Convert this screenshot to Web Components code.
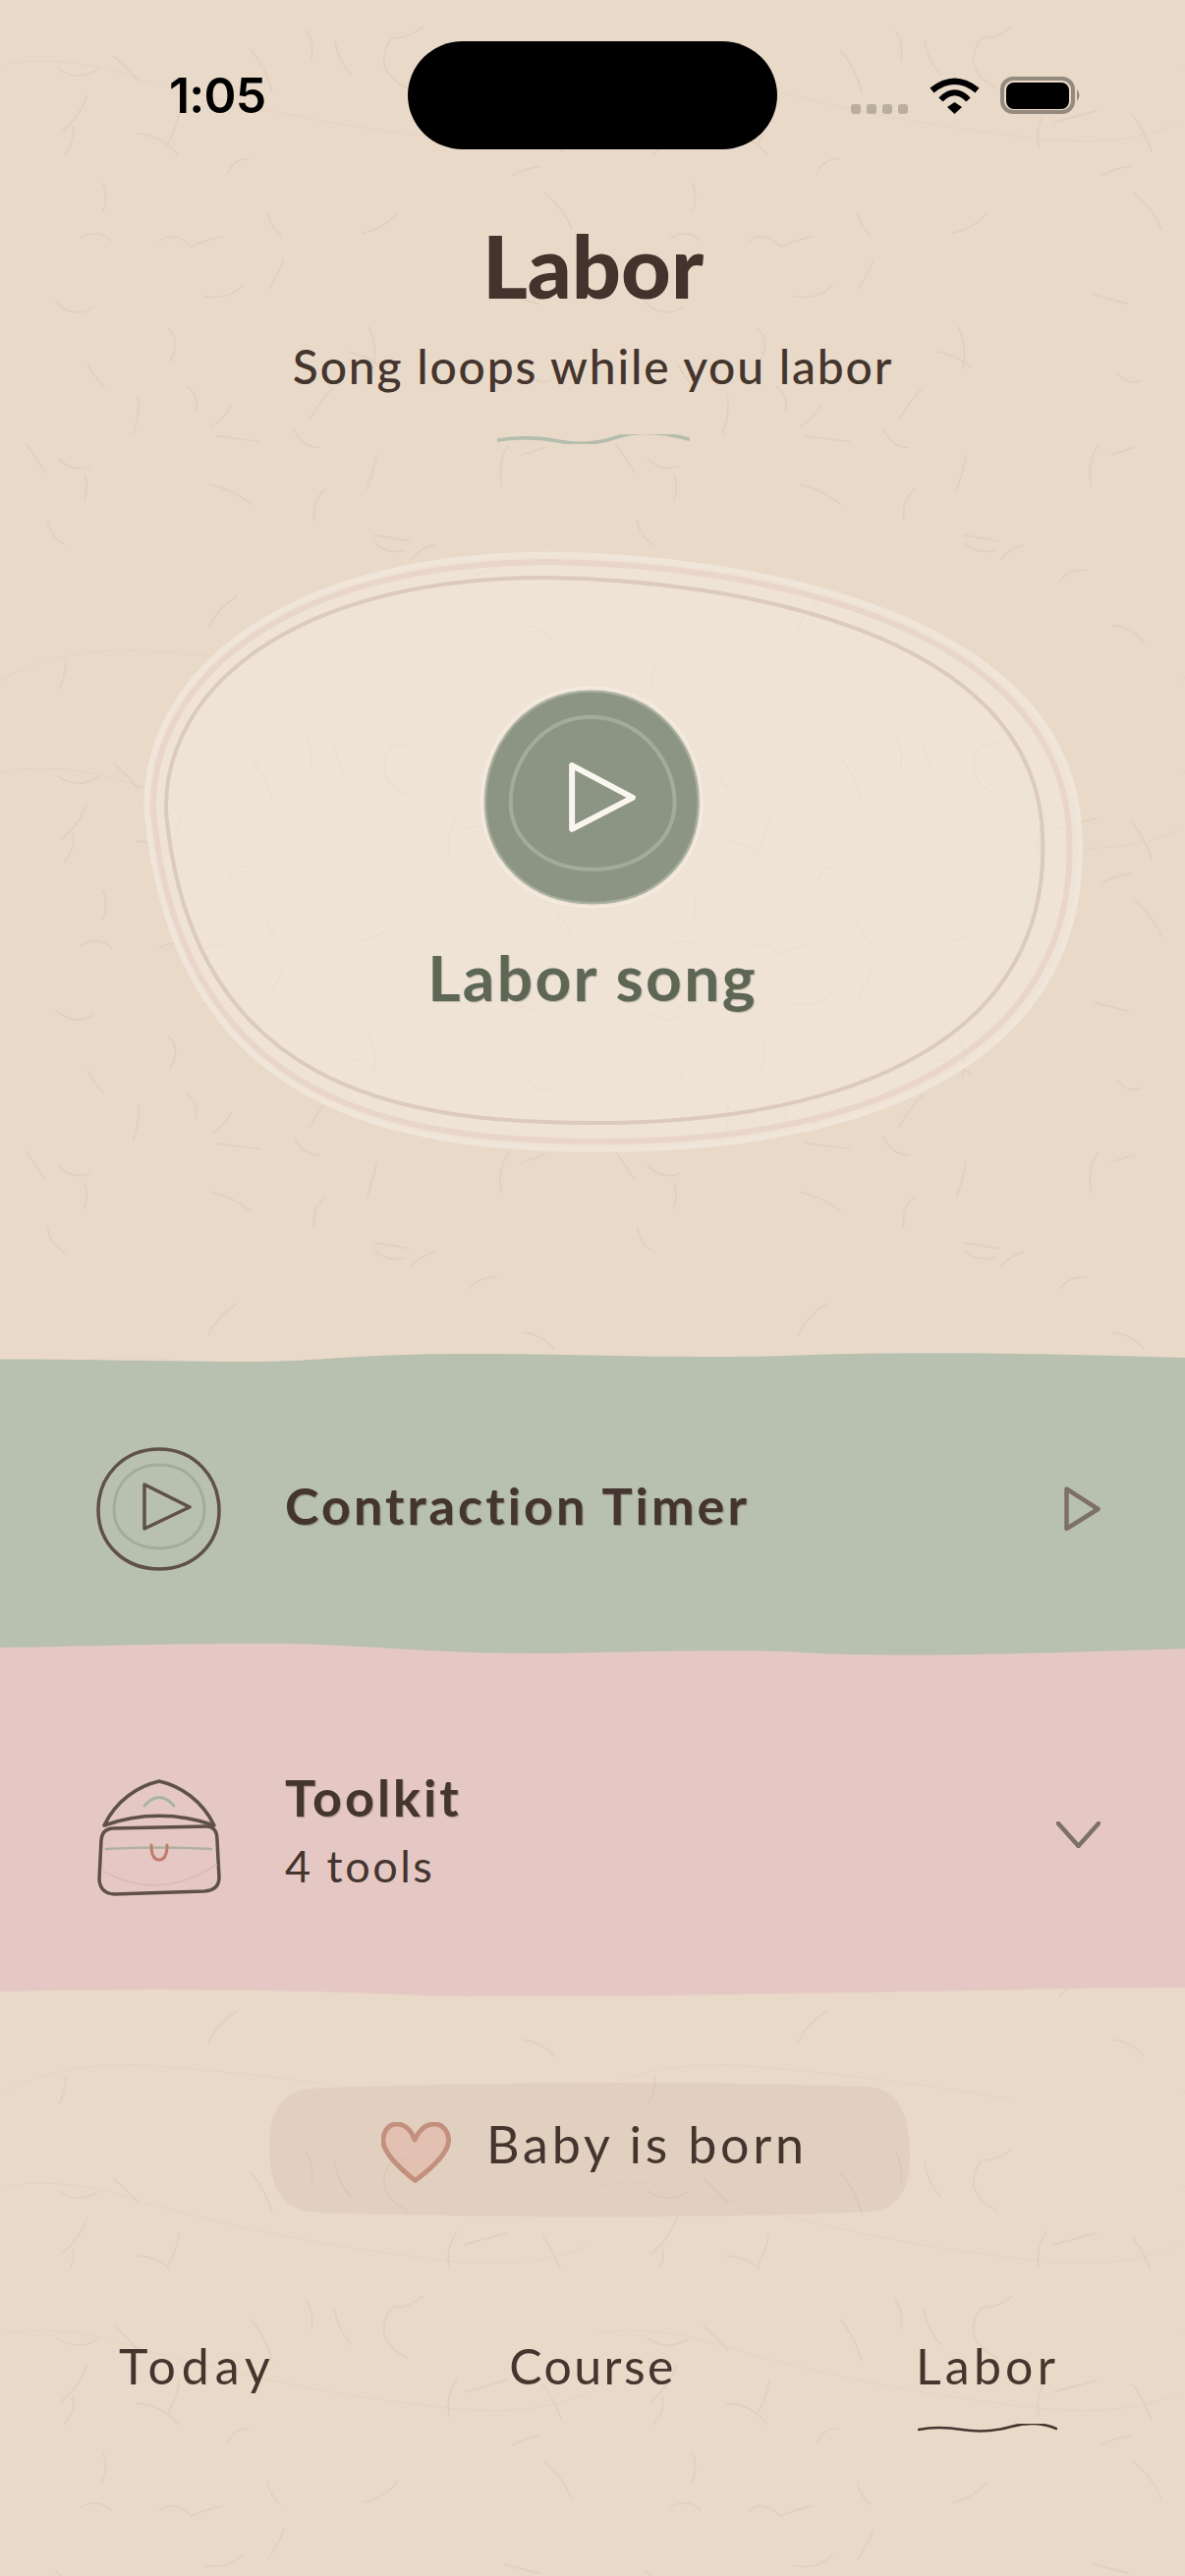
<!DOCTYPE html>
<html lang="en">
<head>
<meta charset="utf-8">
<title>Labor</title>
<style>
  html, body { margin: 0; padding: 0; background: #e9d9c8; }
</style>
</head>
<body>
<labor-app>
  <status-bar></status-bar>
  <page-header title="Labor" subtitle="Song loops while you labor"></page-header>
  <song-blob label="Labor song"></song-blob>
  <wave-row tone="sage" title="Contraction Timer" icon="timer" action="play"></wave-row>
  <wave-row tone="blush" title="Toolkit" detail="4 tools" icon="bag" action="chevron"></wave-row>
  <born-button label="Baby is born"></born-button>
  <tab-bar active="Labor"></tab-bar>
</labor-app>

<script>
const FONT = `Lato, "Noto Sans", sans-serif`
const INK = '#44352e'

// Fibres of the paper, in a 1542x1850 box that maps on a 600x720 tile
const FIBRES = [
  'M152 180Q205 215 255 182', 'M298 148Q330 175 362 212', 'M228 250Q210 305 160 345',
  'M190 330Q200 365 168 405', 'M358 350Q420 350 465 405', 'M470 290Q460 340 440 375',
  'M655 130Q695 175 712 240', 'M800 80Q822 110 815 155', 'M875 105Q885 160 918 195',
  'M1105 70Q1070 100 1025 100Q1000 130 1005 170Q1020 210 1065 230',
  'M595 455Q610 415 650 415', 'M270 480Q285 520 268 555', 'M700 555Q705 590 735 615',
  'M1040 555Q1010 595 950 610', 'M212 622Q255 595 292 630',
  'M418 630Q455 600 500 645Q530 630 582 618', 'M742 680Q730 715 703 755',
  'M635 745Q600 785 535 775', 'M145 790Q190 835 243 805', 'M440 860Q475 890 445 945',
  'M230 950Q245 985 272 1010', 'M965 855Q990 910 975 965', 'M910 920Q950 925 1000 960',
  'M490 1012Q520 1035 513 1075', 'M605 1058Q590 1095 552 1115', 'M362 1040Q365 1090 348 1135',
  'M870 1015Q835 1050 808 1100', 'M565 1140L680 1155', 'M770 1125Q790 1170 835 1170',
  'M68 1160L118 1235', 'M152 1200Q190 1235 235 1220', 'M222 1245Q232 1280 220 1310',
  'M985 1190Q975 1240 960 1280', 'M1330 1165Q1300 1210 1312 1270', 'M1365 1190L1425 1170',
  'M550 1268Q610 1280 658 1320', 'M850 1280Q815 1310 822 1360', 'M125 1360Q130 1405 170 1425',
  'M980 1400L1070 1415', 'M980 1420Q1010 1450 1060 1440', 'M1075 1465Q1095 1435 1135 1425',
  'M1230 1520Q1250 1490 1300 1490', 'M1340 460Q1370 440 1415 435', 'M1425 505Q1475 545 1495 600',
  'M1195 285Q1165 330 1175 385', 'M1215 320L1325 290', 'M1420 300Q1450 340 1470 396',
  'M1370 1635Q1420 1640 1450 1680', 'M620 1560Q570 1590 545 1642', 'M172 1732Q170 1770 155 1802',
  'M1320 771L1410 795', 'M1380 975Q1410 1010 1440 995'
]
const FAINT = ['M0 170Q130 145 280 180Q700 310 1150 360Q1400 390 1542 320', 'M0 1781Q120 1700 350 1700Q700 1720 1100 1790']

function paperUrl() {
  const svg = `<svg xmlns="http://www.w3.org/2000/svg" width="600" height="720" viewBox="0 0 1542 1850" fill="none" stroke-linecap="round">`
    + `<path d="${FIBRES.join('')}" stroke="#8a7055" stroke-opacity=".085" stroke-width="4.5"/>`
    + `<path d="${FAINT.join('')}" stroke="#8a7055" stroke-opacity=".04" stroke-width="3"/></svg>`
  return `url("data:image/svg+xml,${encodeURIComponent(svg)}")`
}

class ShadowElement extends HTMLElement {
  constructor() {
    super()
    this.attachShadow({mode: 'open'})
  }

  connectedCallback() {
    this.shadowRoot.innerHTML = this.render()
  }

  attr(name) {
    return this.getAttribute(name) || ''
  }
}

class LaborApp extends ShadowElement {
  render() {
    return `<style>
      :host {
        display: flex; flex-direction: column;
        width: 1206px; height: 2622px; overflow: hidden;
        background: #e9d9c8 ${paperUrl()} 0 0 / 600px 720px repeat;
        font-family: ${FONT}; color: ${INK};
      }
    </style><slot></slot>`
  }
}

class StatusBar extends ShadowElement {
  render() {
    return `<style>
      :host {
        display: grid; grid-template-columns: 243px 376px 1fr;
        align-items: center; flex: none;
        height: 110px; padding: 42px 0 0 172px;
      }
      .time { font: 600 50px/1 Inter, sans-serif; color: #000; letter-spacing: -.8px; }
      .island { height: 110px; background: #000; border-radius: 56px / 55px; }
      .icons { display: flex; align-items: center; margin-left: 75px; }
      .dots { display: flex; gap: 6px; margin: 27px 22px 0 0; }
      .dots i { width: 10px; height: 10px; border-radius: 3px; background: #b9ae9f; }
      svg { display: block; }
    </style>
    <div class="time">1:05</div>
    <div class="island"></div>
    <div class="icons">
      <div class="dots"><i></i><i></i><i></i><i></i></div>
      <svg width="51" height="37" viewBox="0 0 51 37" fill="none" stroke="#000">
        <path d="M2.5 13Q25.5-5.5 48.5 13" stroke-width="6.5"/>
        <path d="M11.5 22.5Q25.5 8 39.5 22.5" stroke-width="6"/>
        <path d="M18 30L25.5 25L33 30L25.5 37Z" fill="#000" stroke="none"/>
      </svg>
      <svg width="84" height="38" viewBox="0 0 84 38" style="margin-left:21px">
        <rect x="2" y="2" width="72" height="34" rx="11" fill="none" stroke="#948b7e" stroke-width="4"/>
        <rect x="6" y="6" width="64" height="27" rx="8" fill="#000"/>
        <path d="M78 13Q83 19 78 25Z" fill="#948b7e"/>
      </svg>
    </div>`
  }
}

class PageHeader extends ShadowElement {
  render() {
    return `<style>
      :host { display: flex; flex-direction: column; align-items: center; flex: none; height: 412px; box-sizing: border-box; padding: 63px 0 0 1px; }
      h1 { margin: 0; font: 900 88px/110px ${FONT}; color: #42332c; }
      p { margin: 20px 0 0; font: 500 48px/56px ${FONT}; letter-spacing: 1.8px; color: ${INK}; }
      svg { display: block; margin-top: 41px; }
    </style>
    <h1>${this.attr('title')}</h1>
    <p>${this.attr('subtitle')}</p>
    <svg width="196" height="10" viewBox="0 0 196 10" fill="none">
      <path d="M1 6Q30 1 62 7T122 3T195 5" stroke="#b5bdad" stroke-width="3.5" stroke-linecap="round"/>
    </svg>`
  }
}

const BLOB = 'M169 826C166 700 300 588 555 588C740 590 1055 640 1061 851C1070 1050 880 1143 605 1143C410 1143 195 1110 169 826Z'

function ring(scaleX, scaleY, cx, cy) {
  return `transform="translate(${cx} ${cy}) scale(${scaleX} ${scaleY}) translate(${-cx} ${-cy})" vector-effect="non-scaling-stroke"`
}

class SongBlob extends ShadowElement {
  render() {
    return `<style>
      :host {
        display: flex; flex-direction: column; align-items: center; flex: none; position: relative;
        width: 950px; height: 606px; margin: 0 0 205px 149px; padding-top: 139px; box-sizing: border-box;
      }
      .shape { position: absolute; left: 0; top: 0; overflow: visible; }
      .play { position: relative; display: block; overflow: visible; margin-right: 44px; }
      .label {
        position: relative; margin: 37px 42px 0 0;
        font: 700 64px/76px ${FONT}; letter-spacing: 2.400px; color: #5e6656;
        text-shadow: 1px 1px 1px rgba(94, 102, 86, .35);
      }
    </style>
    <svg class="shape" width="950" height="606" viewBox="149 564 950 606" fill="none">
      <path d="${BLOB}" ${ring(1.065, 1.092, 477, 848)} fill="#f5ede4" fill-opacity=".5" stroke="#f0e5d9" stroke-width="5"/>
      <path d="${BLOB}" ${ring(1.045, 1.063, 458, 842)} stroke="#e9d5ca" stroke-width="6"/>
      <path d="${BLOB}" stroke="#dccabd" stroke-width="4"/>
    </svg>
    <svg class="play" width="219" height="217" viewBox="70 70 656 650" fill="none">
      <path d="M395 60C600 60 734 225 734 410C734 595 600 730 400 730C200 730 61 595 61 410C61 225 190 60 395 60Z" stroke="#f5ede2" stroke-width="5"/>
      <path d="M395 72C590 72 722 230 722 410C722 590 590 718 400 718C210 718 73 590 73 410C73 230 200 72 395 72Z" fill="#8c9583" stroke="#a8af9f" stroke-width="7"/>
      <path d="M395 150C540 150 650 280 650 410C650 530 540 615 400 615C260 615 150 530 150 410C150 280 250 150 395 150Z" stroke="#a3ab9b" stroke-width="12"/>
      <path d="M337 298L522 396L337 492Z" stroke="#faf5ee" stroke-width="18" stroke-linejoin="round"/>
    </svg>
    <div class="label">${this.attr('label')}</div>`
  }
}

const ROW_ICONS = {
  timer: `<svg width="123" height="123" viewBox="100 1475 123 123" fill="none" stroke-linejoin="round" stroke-linecap="round">
    <path d="M162 1475C198 1475 223 1503 223 1538C223 1572 197 1597 162 1597C127 1597 100 1572 100 1537C100 1502 126 1475 162 1475Z" stroke="#5f5148" stroke-width="3.5"/>
    <path d="M162 1491C190 1491 208 1511 208 1537C208 1560 188 1576 162 1576C136 1576 116 1560 116 1537C116 1511 134 1491 162 1491Z" stroke="#a3ab9b" stroke-width="3"/>
    <path d="M147 1511L193 1534L147 1556Z" stroke="#5f5148" stroke-width="3.5"/>
  </svg>`,
  bag: `<svg width="123" height="116" viewBox="100 1812 123 116" fill="none" stroke-linejoin="round" stroke-linecap="round">
    <path d="M106 1857C118 1832 140 1817 162 1812C184 1817 206 1832 218 1857C182 1844 142 1844 106 1857Z" stroke="#5f5148" stroke-width="3.5"/>
    <path d="M147 1837Q162 1820 177 1837" stroke="#a8b3a3" stroke-width="3"/>
    <path d="M114 1860L210 1858Q221 1858 221 1872L223 1910Q223 1923 208 1924L116 1927Q102 1926 101 1912L103 1872Q104 1861 114 1860Z" stroke="#5f5148" stroke-width="3.5"/>
    <path d="M108 1881Q162 1878 215 1881" stroke="#aeb1a0" stroke-width="2.5"/>
    <path d="M154 1877Q154 1892 162 1892Q170 1892 170 1877" stroke="#c4786a" stroke-width="3"/>
    <path d="M106 1904Q162 1935 220 1897" stroke="#d9bdb3" stroke-width="2"/>
  </svg>`
}

const ROW_ACTIONS = {
  play: `<svg width="37" height="45" viewBox="0 0 37 45" fill="none"><path d="M2.5 2.5L34.5 23L2.5 43Z" stroke="#7d7068" stroke-width="4.5" stroke-linejoin="round"/></svg>`,
  chevron: `<svg width="45" height="27" viewBox="0 0 45 27" fill="none"><path d="M2 2L22.5 25L43 2" stroke="#7d7068" stroke-width="4.5" stroke-linecap="round" stroke-linejoin="round"/></svg>`
}

const ROW_TONES = {
  sage: {
    fill: '#b8c0b0', height: 315, top: 0, pad: 7, lift: -8, actionLift: -2,
    edge: 'M0 8.5C60 8 130 10 250 11C330 11 360 2 500 3C600 4 700 8 800 5C860 2 1000 0 1206 7V315H0Z'
  },
  blush: {
    fill: '#e5c8c3', height: 359, top: -17, pad: 36, lift: -16, actionLift: -6,
    edge: 'M0 4C80 3 200 -1 290 0C390 2 430 10 560 10C640 8 720 6 800 8C880 14 1000 12 1206 5V350C1100 350 980 354 800 356C680 359 560 359 450 359C300 352 150 350 0 354Z'
  }
}

class WaveRow extends ShadowElement {
  render() {
    const tone = ROW_TONES[this.attr('tone')]
    const detail = this.attr('detail')
    return `<style>
      :host {
        display: flex; align-items: center; flex: none; position: relative; box-sizing: border-box;
        height: ${tone.height}px; margin-top: ${tone.top}px; padding: ${tone.pad}px 86px 0 100px;
      }
      .wave { position: absolute; left: 0; top: 0; }
      .icon { position: relative; flex: none; width: 123px; display: flex; }
      .icon svg { display: block; overflow: visible; }
      .text { position: relative; flex: 1; margin: ${tone.lift}px 0 0 67px; }
      .title {
        font: 700 52px/60px ${FONT}; letter-spacing: 3.100px; color: ${INK};
        text-shadow: 1px 1px 1px rgba(68, 53, 46, .35);
      }
      .detail { margin-top: 13px; font: 400 45px/54px ${FONT}; letter-spacing: 2.500px; color: ${INK}; }
      .action { position: relative; display: flex; flex: none; margin-top: ${tone.actionLift}px; }
    </style>
    <svg class="wave" width="1206" height="${tone.height}" viewBox="0 0 1206 ${tone.height}">
      <path d="${tone.edge}" fill="${tone.fill}"/>
    </svg>
    <div class="icon">${ROW_ICONS[this.attr('icon')]}</div>
    <div class="text">
      <div class="title">${this.attr('title')}</div>
      ${detail ? `<div class="detail">${detail}</div>` : ''}
    </div>
    <div class="action">${ROW_ACTIONS[this.attr('action')]}</div>`
  }
}

class BornButton extends ShadowElement {
  render() {
    return `<style>
      :host {
        display: flex; align-items: center; justify-content: center; gap: 36px; flex: none; position: relative;
        width: 655px; height: 138px; margin: 88px 0 52px 273px; box-sizing: border-box; padding-left: 9px;
      }
      .bg { position: absolute; left: 0; top: 0; overflow: visible; }
      .heart { position: relative; display: block; margin-top: 4px; }
      .label { position: relative; margin-top: -14px; font: 400 52px/60px ${FONT}; letter-spacing: 3.800px; color: ${INK}; }
    </style>
    <svg class="bg" width="655" height="138" viewBox="0 0 655 138">
      <path d="M40 6C200 -1 450 -2 612 4C640 7 652 30 653 70C654 110 640 128 615 131C450 139 200 137 50 132C15 130 3 110 1 70C0 35 10 10 40 6Z" fill="#9a8a78" fill-opacity=".1"/>
    </svg>
    <svg class="heart" width="71" height="62" viewBox="0 0 71 62">
      <path d="M34 18C30 7 23 2 16 2C7 2 1.500 10 2 20C3 33 20 48 34.500 59.500C50 48 67 33 68.500 20C69 10 63 2 54 2C46 2 39 7 34 18Z" fill="#e3b9ad" fill-opacity=".7" stroke="#c4907e" stroke-width="5" stroke-linejoin="round"/>
    </svg>
    <div class="label">${this.attr('label')}</div>`
  }
}

const TAB_SPACING = {Today: 6, Course: 2.4, Labor: 4.2}

class TabBar extends ShadowElement {
  render() {
    const tabs = Object.keys(TAB_SPACING).map(name => {
      const active = name === this.attr('active')
      return `<div class="tab">
        <span style="letter-spacing:${TAB_SPACING[name]}px">${name}</span>
        ${active ? `<svg width="142" height="10" viewBox="0 0 142 10" fill="none"><path d="M1 6Q20 2 45 6T95 3T141 5" stroke="${INK}" stroke-width="2.500" stroke-linecap="round"/></svg>` : ''}
      </div>`
    }).join('')
    return `<style>
      :host {
        display: grid; grid-template-columns: repeat(3, 1fr); align-items: start; flex: none;
        height: 312px; padding-top: 70px; box-sizing: border-box;
        background: #e9d9c8 ${paperUrl()} 0 0 / 600px 720px repeat;
      }
      .tab { display: flex; flex-direction: column; align-items: center; }
      span { font: 400 50px/56px ${FONT}; color: ${INK}; }
      svg { display: block; margin-top: 31px; }
    </style>${tabs}`
  }
}

customElements.define('labor-app', LaborApp)
customElements.define('status-bar', StatusBar)
customElements.define('page-header', PageHeader)
customElements.define('song-blob', SongBlob)
customElements.define('wave-row', WaveRow)
customElements.define('born-button', BornButton)
customElements.define('tab-bar', TabBar)
</script>
</body>
</html>
